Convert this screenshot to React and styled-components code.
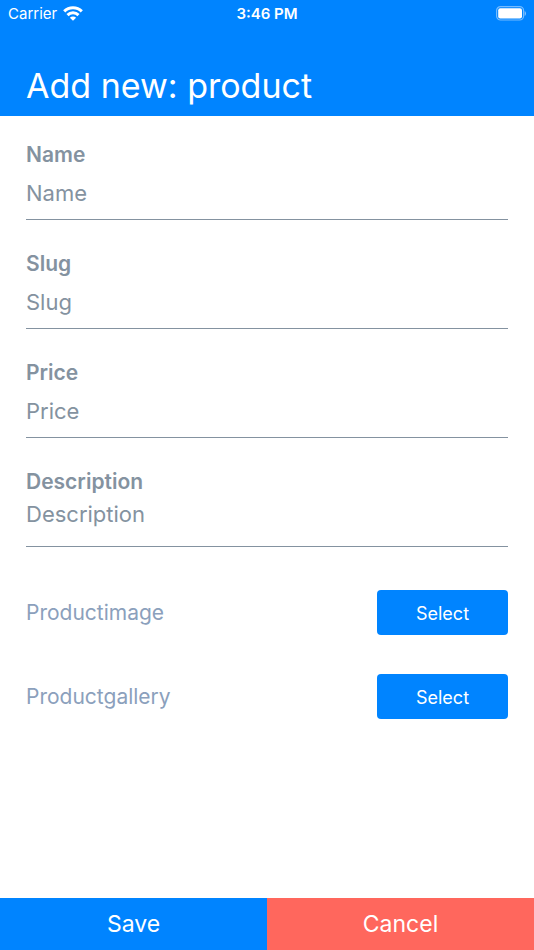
import React from "react";
import styled, { createGlobalStyle } from "styled-components";

const GlobalStyle = createGlobalStyle`
  * {
    box-sizing: border-box;
  }
  body {
    margin: 0;
    background: #fff;
    font-family: Inter, "Liberation Sans", sans-serif;
  }
`;

const Screen = styled.form`
  min-height: 100vh;
  display: flex;
  flex-direction: column;
`;

const Header = styled.header`
  background: #0084ff;
  color: #fff;
`;

const StatusBar = styled.div`
  display: grid;
  grid-template-columns: 1fr auto 1fr;
  align-items: center;
  height: 27px;
  padding: 0 8px;
  font-size: 15px;
`;

const Carrier = styled.div`
  display: flex;
  align-items: center;
  gap: 6px;
`;

const Clock = styled.span`
  font-weight: 600;
`;

const Battery = styled.svg`
  justify-self: end;
`;

const Title = styled.h1`
  margin: 0;
  padding: 37px 26px 8px;
  font-size: 34px;
  line-height: 44px;
  font-weight: 400;
`;

const Content = styled.main`
  flex: 1;
  padding: 25px 26px;
`;

const Field = styled.div`
  display: flex;
  flex-direction: column;
  margin-bottom: 30px;
`;

const Label = styled.label`
  font-size: 21px;
  line-height: 28px;
  font-weight: 600;
  color: #8492a0;
`;

const Input = styled.input`
  height: 51px;
  padding: 0 0 2px;
  border: 0;
  border-bottom: 1px solid #8492a0;
  outline: none;
  background: transparent;
  font: 400 22px/28px Inter, "Liberation Sans", sans-serif;
  color: #333;

  &::placeholder {
    color: #8492a0;
    opacity: 1;
  }
`;

const TextArea = styled(Input)`
  padding: 4px 0 0;
  resize: none;
  border-radius: 0;
`;

const MediaList = styled.div`
  display: flex;
  flex-direction: column;
  gap: 39px;
  padding-top: 13px;
`;

const MediaRow = styled.div`
  display: flex;
  align-items: center;
  justify-content: space-between;
`;

const MediaLabel = styled.span`
  font-size: 21px;
  line-height: 29px;
  font-weight: 400;
  color: #8ba0bc;
`;

const SelectButton = styled.button`
  width: 131px;
  height: 45px;
  padding: 2px 0 0;
  border: 0;
  border-radius: 4px;
  background: #0084ff;
  color: #fff;
  font: 400 18px/24px Inter, "Liberation Sans", sans-serif;
`;

const Footer = styled.footer`
  display: flex;
`;

const FooterButton = styled.button`
  flex: 1;
  height: 52px;
  border: 0;
  background: ${(props) => props.$color};
  color: #fff;
  font: 400 23px/28px Inter, "Liberation Sans", sans-serif;
`;

const fields = ["Name", "Slug", "Price"];
const media = ["Productimage", "Productgallery"];

export default function App() {
  return (
    <>
      <GlobalStyle />
      <Screen onSubmit={(e) => e.preventDefault()}>
        <Header>
          <StatusBar>
            <Carrier>
              Carrier
              <svg width="20" height="15" viewBox="0 0 20 15" fill="none" stroke="#fff" strokeWidth="3">
                <path d="M1.2 5.4a12.4 12.4 0 0 1 17.6 0" />
                <path d="M4.5 9.1a7.8 7.8 0 0 1 11 0" />
                <path d="M10 14.8 6.9 11.7a4.4 4.4 0 0 1 6.2 0z" fill="#fff" stroke="none" />
              </svg>
            </Carrier>
            <Clock>3:46 PM</Clock>
            <Battery width="30" height="15" viewBox="0 0 30 15" fill="#fff">
              <rect x="0.6" y="0.6" width="27" height="13.4" rx="4" fill="none" stroke="#fff" strokeOpacity="0.45" strokeWidth="1.2" />
              <rect x="2.2" y="2.2" width="23.8" height="10.2" rx="2" />
              <path d="M28.7 5c1.7.8 1.7 4.2 0 5z" fillOpacity="0.5" />
            </Battery>
          </StatusBar>
          <Title>Add new: product</Title>
        </Header>
        <Content>
          {fields.map((name) => (
            <Field key={name}>
              <Label htmlFor={name}>{name}</Label>
              <Input id={name} type="text" placeholder={name} />
            </Field>
          ))}
          <Field>
            <Label htmlFor="Description">Description</Label>
            <TextArea as="textarea" id="Description" placeholder="Description" />
          </Field>
          <MediaList>
            {media.map((name) => (
              <MediaRow key={name}>
                <MediaLabel id={name}>{name}</MediaLabel>
                <SelectButton type="button" aria-describedby={name}>Select</SelectButton>
              </MediaRow>
            ))}
          </MediaList>
        </Content>
        <Footer>
          <FooterButton type="submit" $color="#0084ff">Save</FooterButton>
          <FooterButton type="button" $color="#ff675d">Cancel</FooterButton>
        </Footer>
      </Screen>
    </>
  );
}
